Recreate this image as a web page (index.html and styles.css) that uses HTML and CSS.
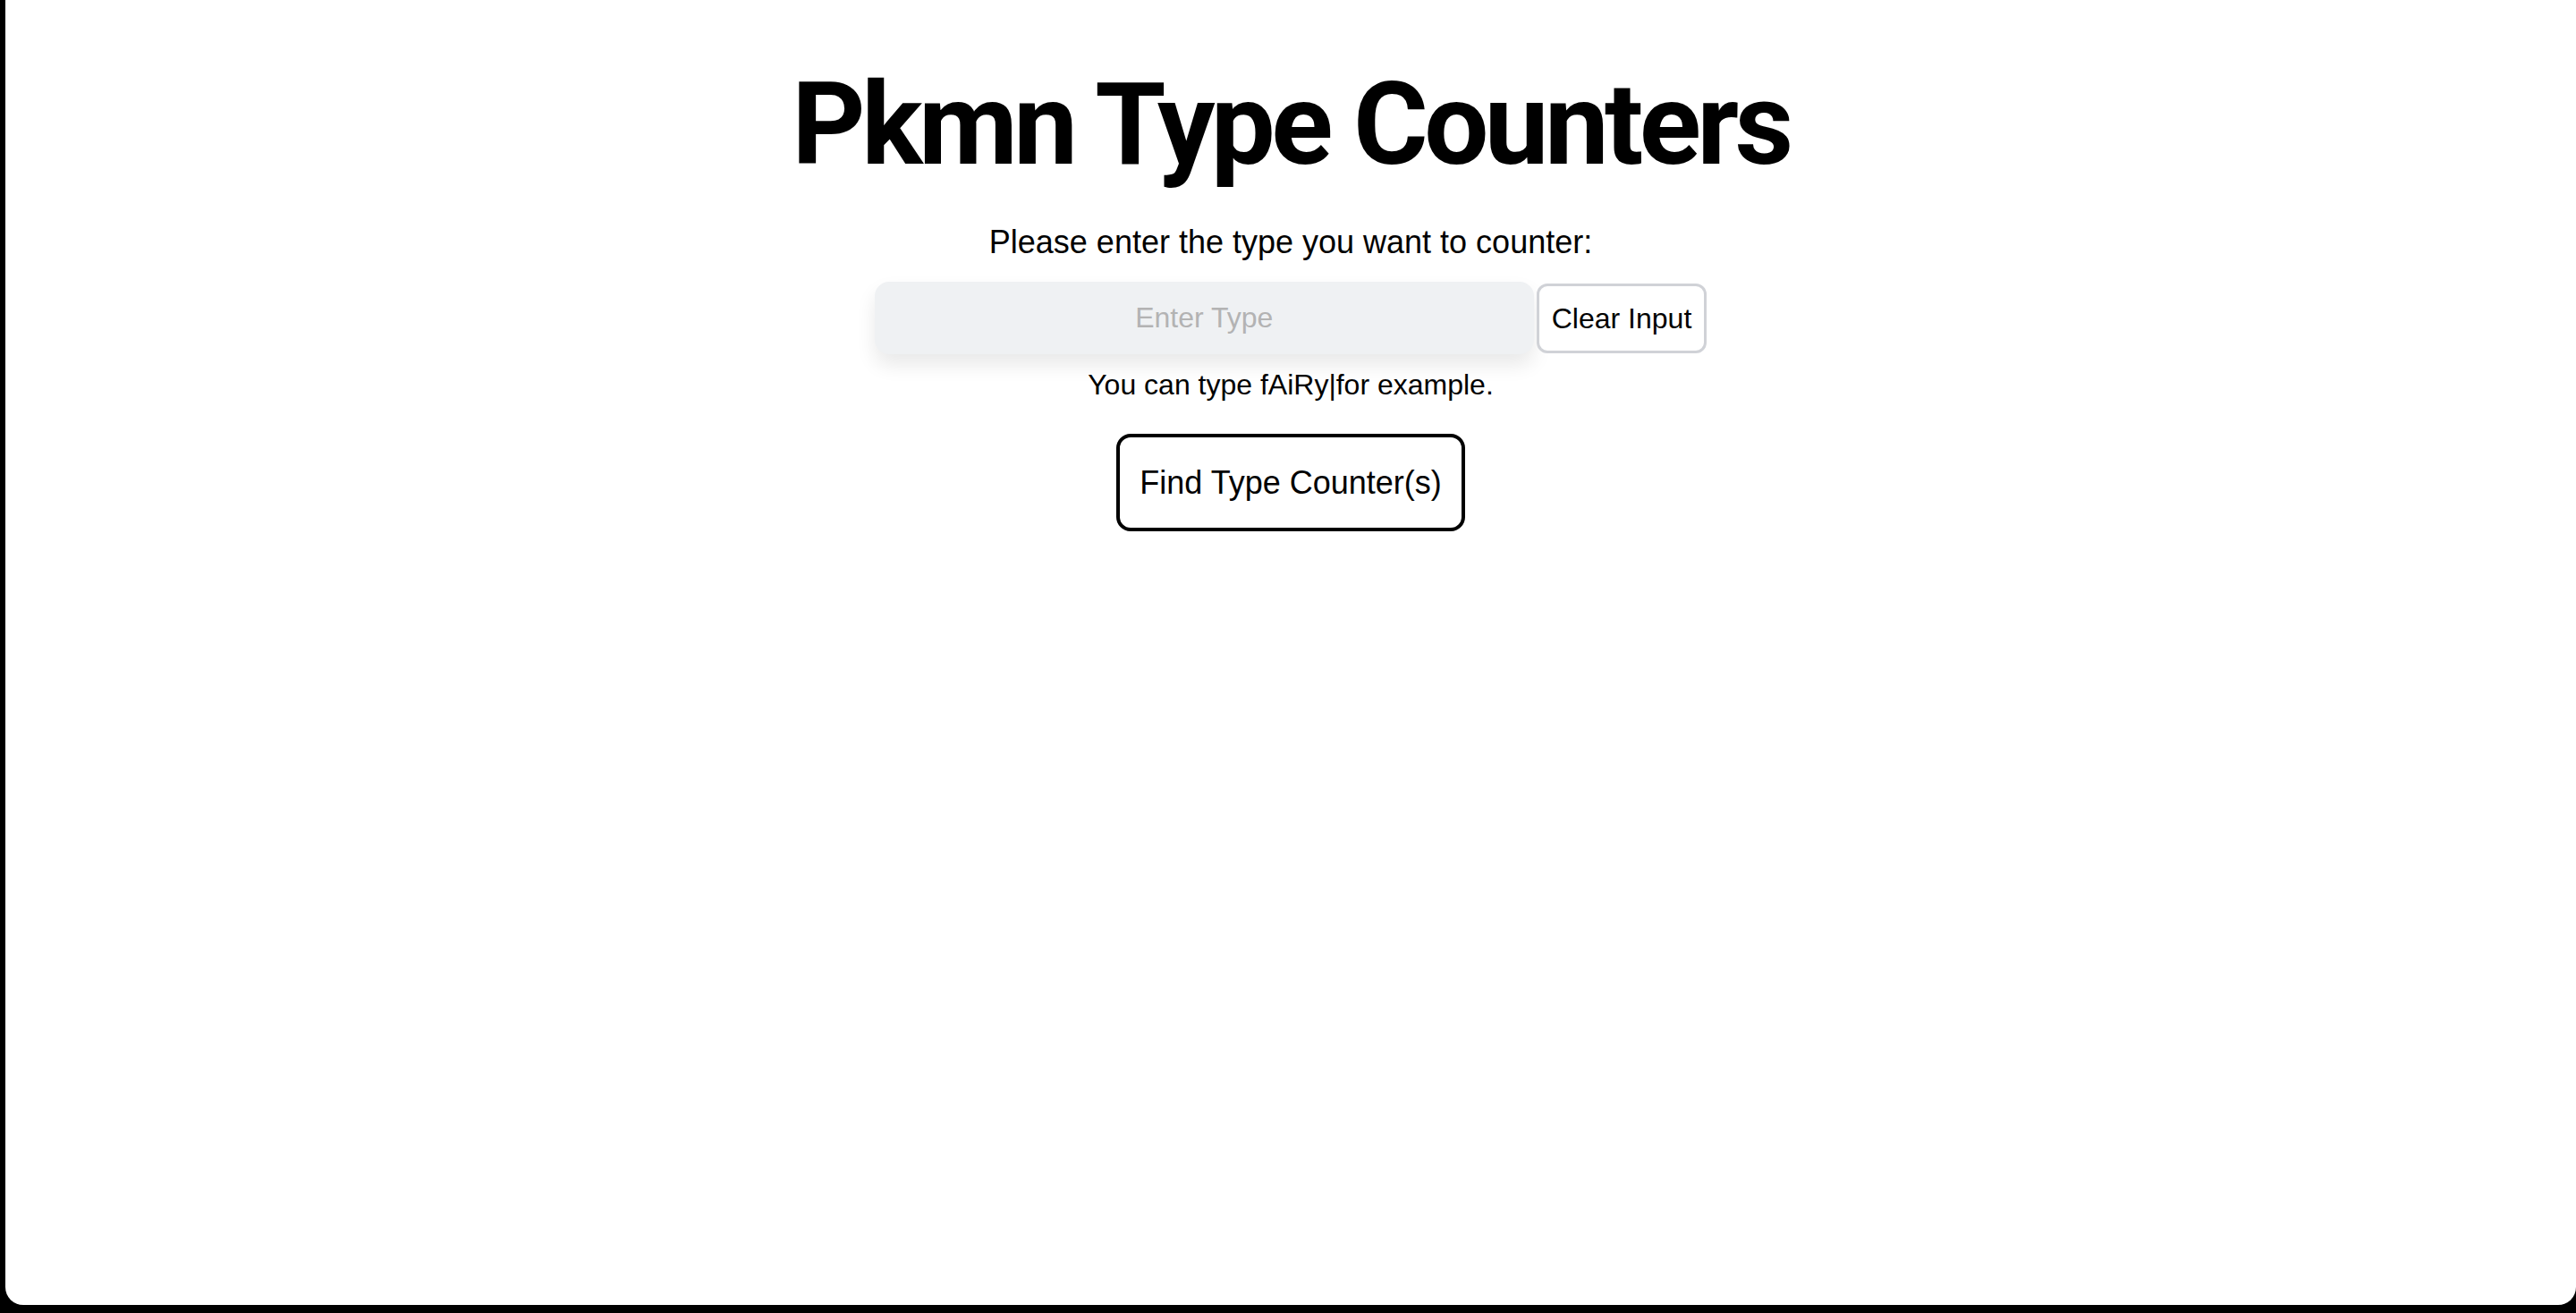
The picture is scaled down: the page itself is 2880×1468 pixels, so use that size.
FILE: index.html
```html
<!DOCTYPE html>
<html lang="en">
<head>
<meta charset="utf-8">
<title>Pkmn Type Counters</title>
<link rel="stylesheet" href="styles.css">
</head>
<body>
<main class="window">
  <h1 class="title">Pkmn Type Counters</h1>
  <p class="prompt">Please enter the type you want to counter:</p>
  <div class="input-row">
    <input class="type-input" type="text" placeholder="Enter Type">
    <button class="clear-btn" type="button">Clear Input</button>
  </div>
  <p class="hint">You can type fAiRy|for example.</p>
  <button class="find-btn" type="button">Find Type Counter(s)</button>
</main>
</body>
</html>
```
FILE: styles.css
```css
html, body {
  margin: 0;
  padding: 0;
  background: #000;
  height: 100%;
}

body {
  font-family: "Liberation Sans", Arial, sans-serif;
  color: #000;
  overflow: hidden;
}

.window {
  margin-left: 6px;
  height: 1459px;
  background: #fff;
  border-radius: 0 0 20px 20px;
  display: flex;
  flex-direction: column;
  align-items: center;
  box-sizing: border-box;
  padding-top: 75px;
}

.title {
  margin: 0;
  font-family: Roboto, "Liberation Sans", Arial, sans-serif;
  font-size: 128px;
  line-height: 1;
  font-weight: 700;
  letter-spacing: -4.6px;
}

.prompt {
  margin: 46px 0 0;
  font-size: 36px;
  line-height: 43px;
}

.input-row {
  margin-top: 23px;
  display: flex;
  align-items: center;
  gap: 3px;
}

.type-input {
  width: 737px;
  height: 81px;
  box-sizing: border-box;
  border: none;
  border-radius: 16px;
  background: #eff1f3;
  font-family: inherit;
  font-size: 32px;
  text-align: center;
  color: #000;
  outline: none;
  box-shadow: 0 12px 22px rgba(0, 0, 0, 0.09);
}

.type-input::placeholder {
  color: #b3b3b3;
}

.clear-btn {
  height: 78px;
  box-sizing: border-box;
  padding: 0 14px;
  border: 3px solid #d0d2d7;
  border-radius: 12px;
  background: #fff;
  font-family: inherit;
  font-size: 32px;
  line-height: 38px;
  color: #000;
}

.hint {
  margin: 15px 0 0;
  font-size: 32px;
  line-height: 38px;
}

.find-btn {
  margin-top: 36px;
  padding: 29px 22px;
  border: 4px solid #000;
  border-radius: 16px;
  background: #fff;
  font-family: inherit;
  font-size: 36px;
  line-height: 43px;
  color: #000;
}
```
